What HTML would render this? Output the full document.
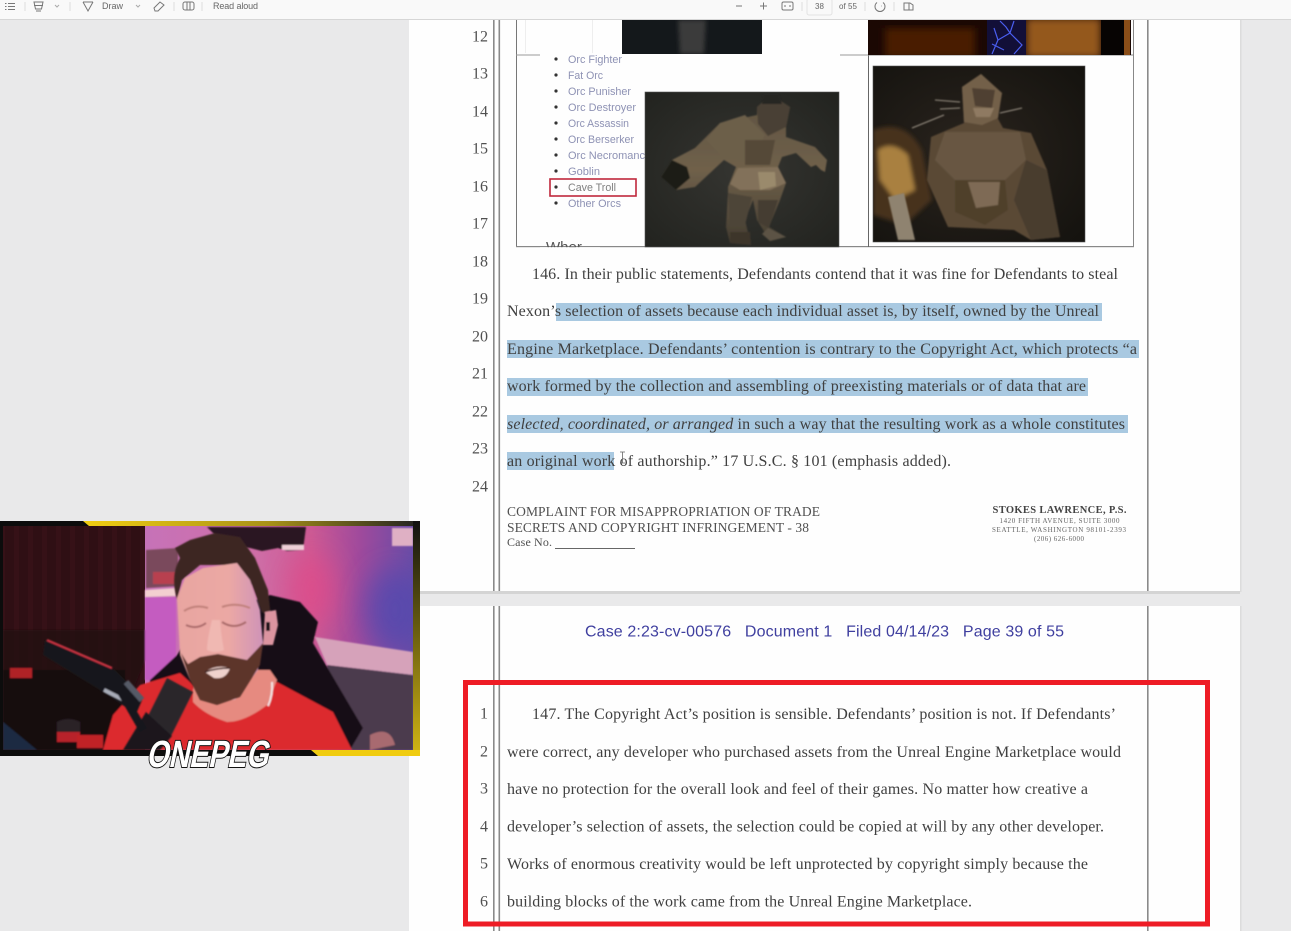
<!DOCTYPE html>
<html><head><meta charset="utf-8"><style>
html,body{margin:0;padding:0;background:#e9e9ea;width:1291px;height:931px;overflow:hidden}
svg{display:block}
.s{font-family:"Liberation Serif",serif;font-size:16px;fill:#404040;filter:blur(.3px)}
.n{font-family:"Liberation Serif",serif;font-size:16px;fill:#505050;text-anchor:end;filter:blur(.3px)}
.u{font-family:"Liberation Sans",sans-serif;font-size:9px;fill:#666;filter:blur(.3px)}
.l{font-family:"Liberation Sans",sans-serif;font-size:11px;fill:#8e92b4;filter:blur(.35px)}
.f{font-family:"Liberation Serif",serif;font-size:13.5px;fill:#505050;filter:blur(.25px)}
.a{font-family:"Liberation Serif",serif;font-size:7px;fill:#666;text-anchor:middle;filter:blur(.25px)}
</style></head><body>
<svg width="1291" height="931" viewBox="0 0 1291 931" xmlns="http://www.w3.org/2000/svg">
<defs>
<filter id="b05"><feGaussianBlur stdDeviation=".8"/></filter>
<filter id="b1"><feGaussianBlur stdDeviation="1.2"/></filter>
<filter id="b2"><feGaussianBlur stdDeviation="2"/></filter>
<filter id="b4"><feGaussianBlur stdDeviation="4"/></filter>
<filter id="b12" x="-50%" y="-50%" width="200%" height="200%"><feGaussianBlur stdDeviation="14"/></filter>
<linearGradient id="wall" x1="0" x2="1" y1="0" y2="0"><stop offset="0" stop-color="#c672b8"/><stop offset=".4" stop-color="#cf6fa8"/><stop offset=".62" stop-color="#cc5a94"/><stop offset=".8" stop-color="#a04a9c"/><stop offset="1" stop-color="#6a4ca6"/></linearGradient>
<linearGradient id="yt" x1="0" x2="1" y1="0" y2="0"><stop offset="0" stop-color="#f2ce12"/><stop offset=".55" stop-color="#a89218"/><stop offset="1" stop-color="#222"/></linearGradient>
<linearGradient id="yr" x1="0" x2="0" y1="0" y2="1"><stop offset="0" stop-color="#111"/><stop offset=".4" stop-color="#5c5210"/><stop offset="1" stop-color="#d2b614"/></linearGradient>
<linearGradient id="face" x1="0" x2="1" y1="0" y2="0"><stop offset="0" stop-color="#e8a5a0"/><stop offset=".6" stop-color="#eba8a4"/><stop offset="1" stop-color="#cf93b8"/></linearGradient>
<radialGradient id="g1" cx=".5" cy=".5" r=".7"><stop offset="0" stop-color="#353531"/><stop offset="1" stop-color="#22231f"/></radialGradient>
<radialGradient id="g2" cx=".45" cy=".5" r=".7"><stop offset="0" stop-color="#2a241e"/><stop offset="1" stop-color="#15130f"/></radialGradient>
<linearGradient id="tb" x1="0" x2="0" y1="0" y2="1"><stop offset="0" stop-color="#5e5240"/><stop offset=".5" stop-color="#6f604a"/><stop offset="1" stop-color="#423b30"/></linearGradient>
<pattern id="cur" width="14" height="10" patternUnits="userSpaceOnUse"><rect width="14" height="10" fill="#2f0f14"/><rect width="5" height="10" fill="#361117"/></pattern>
</defs>

<!-- pages -->
<rect x="0" y="0" width="1291" height="931" fill="#e9e9ea"/>
<rect x="409" y="15" width="831" height="576" fill="#fefefe"/>
<rect x="409" y="606" width="831" height="330" fill="#fefefe"/>
<rect x="409" y="591" width="831" height="3" fill="#d4d4d4"/>
<rect x="1240" y="15" width="1.5" height="577" fill="#dcdcdc"/>
<rect x="1240" y="606" width="1.5" height="325" fill="#dcdcdc"/>

<!-- page rules -->
<g fill="#8a8a8a">
<rect x="493" y="15" width="1.6" height="576"/><rect x="498.5" y="15" width="1.6" height="576"/><rect x="1147" y="15" width="1.6" height="576"/>
<rect x="493" y="606" width="1.6" height="325"/><rect x="498.5" y="606" width="1.6" height="325"/><rect x="1147" y="606" width="1.6" height="325"/>
</g>

<!-- table area -->
<rect x="516" y="20" width="1" height="227" fill="#777"/>
<rect x="1133" y="20" width="1" height="227" fill="#888"/>
<rect x="516" y="246" width="618" height="1.2" fill="#888"/>
<rect x="868" y="20" width="1" height="227" fill="#666"/>
<rect x="516" y="54.5" width="24" height="1" fill="#999"/>
<rect x="840" y="54.5" width="28" height="1" fill="#999"/>
<rect x="868" y="54.5" width="266" height="1" fill="#888"/>
<rect x="525" y="20" width="1" height="33" fill="#eee"/><rect x="592" y="20" width="1" height="33" fill="#eee"/><rect x="748" y="20" width="1" height="33" fill="#eee"/>

<!-- top images -->
<rect x="622" y="20" width="140" height="34" fill="#14181b"/>
<svg x="622" y="20" width="140" height="34" viewBox="622 20 140 34"><path d="M678 20h28l-2 34h-24z" fill="#3a3a3a" filter="url(#b2)"/></svg>
<svg x="868" y="20" width="263" height="35" viewBox="868 20 263 35">
<rect x="868" y="20" width="263" height="35" fill="#1b0803"/>
<rect x="885" y="28" width="90" height="30" fill="#4a1c06" filter="url(#b4)"/>
<rect x="1026" y="18" width="75" height="40" fill="#94581e" filter="url(#b4)"/>
<rect x="1101" y="18" width="23" height="40" fill="#070403"/>
<rect x="1124" y="20" width="6" height="35" fill="#8a4e18"/>
<rect x="987" y="20" width="39" height="35" fill="#120f38"/>
<path d="M992 54L998 40L994 28M998 40L1010 33L1014 21M1010 33L1022 45L1014 54M1000 21L1006 27L1010 33M992 44L1004 50" stroke="#4a5ef0" stroke-width="1.2" fill="none"/>
</svg>

<!-- list -->
<g>
<text class="l" x="568" y="63" textLength="54" lengthAdjust="spacingAndGlyphs">Orc Fighter</text>
<text class="l" x="568" y="79" textLength="35" lengthAdjust="spacingAndGlyphs">Fat Orc</text>
<text class="l" x="568" y="95" textLength="63" lengthAdjust="spacingAndGlyphs">Orc Punisher</text>
<text class="l" x="568" y="111" textLength="68" lengthAdjust="spacingAndGlyphs">Orc Destroyer</text>
<text class="l" x="568" y="127" textLength="61" lengthAdjust="spacingAndGlyphs">Orc Assassin</text>
<text class="l" x="568" y="143" textLength="66" lengthAdjust="spacingAndGlyphs">Orc Berserker</text>
<text class="l" x="568" y="159">Orc Necromancer</text>
<text class="l" x="568" y="175" textLength="32" lengthAdjust="spacingAndGlyphs">Goblin</text>
<text class="l" x="568" y="191" textLength="48" lengthAdjust="spacingAndGlyphs" style="fill:#808080">Cave Troll</text>
<text class="l" x="568" y="207" textLength="53" lengthAdjust="spacingAndGlyphs">Other Orcs</text>
</g>
<g fill="#333">
<circle cx="556" cy="59" r="1.6"/><circle cx="556" cy="75" r="1.6"/><circle cx="556" cy="91" r="1.6"/><circle cx="556" cy="107" r="1.6"/><circle cx="556" cy="123" r="1.6"/><circle cx="556" cy="139" r="1.6"/><circle cx="556" cy="155" r="1.6"/><circle cx="556" cy="171" r="1.6"/><circle cx="556" cy="187" r="1.6"/><circle cx="556" cy="203" r="1.6"/>
</g>
<rect x="550" y="179" width="86" height="17" fill="none" stroke="#c0283c" stroke-width="1.6"/>
<text x="546" y="252" style="font-family:'Liberation Sans',sans-serif;font-size:15px;fill:#555">Wher</text>
<rect x="540" y="247.2" width="60" height="9" fill="#fefefe"/>

<!-- troll 1 -->
<rect x="645" y="92" width="194" height="155" fill="url(#g1)"/>
<svg x="645" y="92" width="194" height="155" viewBox="645 92 194 155">
<g filter="url(#b05)">
<path d="M757 107L771 95L790 107L786 127L786 137L815 147L827 160L825 172L821 170L816 165L811 167L796 153L782 157L778 167L786 183L780 200L769 227L786 237L770 241L757 220L753 200L745 220L751 245L730 243L726 227L728 193L728 187L736 167L724 160L695 187L676 190L661 177L672 160L695 148L720 123L757 115Z" fill="url(#tb)"/>
<path d="M661 177L672 160L687 167L690 178L676 190Z" fill="#1a1a18"/>
<path d="M720 123L745 115L765 135L752 160L724 158L706 140Z" fill="#6c5e4a"/>
<path d="M757 107L771 95L790 107L786 127L768 136L758 124Z" fill="#4a4136"/>
<path d="M763 95h16l3 9h-20z" fill="#262624"/>
<path d="M738 168L778 167L786 183L770 190L740 190L730 184Z" fill="#82715a"/>
<path d="M758 172L775 172L776 186L760 190Z" fill="#9a8a6c"/>
<path d="M728 193L752 197L745 225L730 225Z" fill="#4e4538"/>
<path d="M758 200L778 200L769 228L758 222Z" fill="#443c32"/>
<path d="M730 232L750 232L751 245L730 243Z" fill="#3c352c"/>
<path d="M768 228L786 237L770 241L762 234Z" fill="#5c5244"/>
<path d="M745 140L775 140L770 165L745 165Z" fill="#544838"/>
</g></svg>

<!-- troll 2 -->
<rect x="873" y="66" width="212" height="176" fill="url(#g2)"/>
<svg x="873" y="66" width="212" height="176" viewBox="873 66 212 176">
<g filter="url(#b2)">
<path d="M873 130Q905 118 922 150L932 200L905 225L873 215Z" fill="#46331f"/>
<path d="M878 150Q892 140 908 155L915 190L895 200L880 180Z" fill="#a98040"/>
</g>
<g filter="url(#b05)">
<path d="M962 87L981 74L1002 93L997 117L1003 128L1031 133L1047 170L1060 237L1031 240L1014 230L948 227L939 207L927 180L931 137L964 123Z" fill="#5a4836"/>
<path d="M962 87L981 74L1002 93L998 118L982 125L964 122Z" fill="#73604a"/>
<path d="M972 88L995 90L992 108L975 106Z" fill="#4f3f30"/>
<path d="M973 108L994 108L990 117L976 117Z" fill="#8f7a62"/>
<path d="M945 132L1020 132L1026 160L1005 180L955 180L935 160Z" fill="#685642"/>
<path d="M955 180L1005 180L1008 210L985 225L955 212Z" fill="#4f3f2c"/>
<path d="M968 182L1000 182L998 205L976 208Z" fill="#7e6b54"/>
<path d="M1026 160L1047 170L1060 237L1031 240L1014 200Z" fill="#4a3c2e"/>
<path d="M935 100L960 102M940 109L960 108M912 128L944 115M1000 113L1022 108" stroke="#9b9386" stroke-width="1.1" fill="none"/>
<path d="M888 197L904 193L915 240L898 240Z" fill="#8f8370"/>
</g></svg>
<rect x="873" y="66" width="212" height="176" fill="none" stroke="#555" stroke-width=".6"/>
<rect x="645" y="92" width="194" height="155" fill="none" stroke="#555" stroke-width=".6"/>

<!-- line numbers top -->
<text class="n" x="488" y="41.5">12</text>
<text class="n" x="488" y="78.5">13</text>
<text class="n" x="488" y="116.5">14</text>
<text class="n" x="488" y="153.5">15</text>
<text class="n" x="488" y="191.5">16</text>
<text class="n" x="488" y="228.5">17</text>
<text class="n" x="488" y="266.5">18</text>
<text class="n" x="488" y="303.5">19</text>
<text class="n" x="488" y="341.5">20</text>
<text class="n" x="488" y="378.5">21</text>
<text class="n" x="488" y="416.5">22</text>
<text class="n" x="488" y="453.5">23</text>
<text class="n" x="488" y="491.5">24</text>

<!-- highlights -->
<g fill="#a9c9e1">
<rect x="556" y="303" width="546" height="18"/>
<rect x="507" y="340" width="632" height="18"/>
<rect x="507" y="378" width="581" height="18"/>
<rect x="507" y="415" width="621" height="18"/>
<rect x="507" y="452" width="107" height="18"/>
</g>

<!-- body text top -->
<text class="s" x="532" y="279" textLength="586" lengthAdjust="spacing">146. In their public statements, Defendants contend that it was fine for Defendants to steal</text>
<text class="s" x="507" y="316" textLength="592" lengthAdjust="spacing">Nexon’s selection of assets because each individual asset is, by itself, owned by the Unreal</text>
<text class="s" x="507" y="354" textLength="630" lengthAdjust="spacing">Engine Marketplace.  Defendants’ contention is contrary to the Copyright Act, which protects “a</text>
<text class="s" x="507" y="391" textLength="579" lengthAdjust="spacing">work formed by the collection and assembling of preexisting materials or of data that are</text>
<text class="s" x="507" y="429" textLength="618" lengthAdjust="spacing"><tspan font-style="italic">selected, coordinated, or arranged</tspan> in such a way that the resulting work as a whole constitutes</text>
<text class="s" x="507" y="466" textLength="444" lengthAdjust="spacing">an original work of authorship.”  17 U.S.C. § 101 (emphasis added).</text>
<path d="M620 452h5M622.5 452v11M620 463h5" stroke="#666" stroke-width=".8" fill="none"/>

<!-- footer -->
<text class="f" x="507" y="516" textLength="313" lengthAdjust="spacing">COMPLAINT FOR MISAPPROPRIATION OF TRADE</text>
<text class="f" x="507" y="532" textLength="302" lengthAdjust="spacing">SECRETS AND COPYRIGHT INFRINGEMENT - 38</text>
<text class="f" x="507" y="546" style="font-size:12px" textLength="45" lengthAdjust="spacing">Case No.</text>
<rect x="555" y="548" width="80" height="1" fill="#666"/>
<text x="1059.5" y="513" text-anchor="middle" textLength="134" lengthAdjust="spacing" style="font-family:'Liberation Serif',serif;font-weight:bold;font-size:10.5px;fill:#444">STOKES LAWRENCE, P.S.</text>
<text class="a" x="1059.5" y="523" textLength="120" lengthAdjust="spacing">1420 FIFTH AVENUE, SUITE 3000</text>
<text class="a" x="1059" y="532" textLength="134" lengthAdjust="spacing">SEATTLE, WASHINGTON 98101-2393</text>
<text class="a" x="1059" y="541" textLength="50" lengthAdjust="spacing">(206) 626-6000</text>

<!-- page 2 -->
<text x="585" y="636.5" textLength="479" lengthAdjust="spacing" xml:space="preserve" style="font-family:'Liberation Sans',sans-serif;font-size:16px;fill:#3f3f9f;white-space:pre;filter:blur(.25px)">Case 2:23-cv-00576   Document 1   Filed 04/14/23   Page 39 of 55</text>
<text class="n" x="488" y="718.5">1</text>
<text class="n" x="488" y="756.5">2</text>
<text class="n" x="488" y="793.5">3</text>
<text class="n" x="488" y="831.5">4</text>
<text class="n" x="488" y="868.5">5</text>
<text class="n" x="488" y="906.5">6</text>
<text class="s" x="532" y="719" textLength="584" lengthAdjust="spacing">147. The Copyright Act’s position is sensible. Defendants’ position is not.  If Defendants’</text>
<text class="s" x="507" y="757" textLength="614" lengthAdjust="spacing">were correct, any developer who purchased assets from the Unreal Engine Marketplace would</text>
<text class="s" x="507" y="794" textLength="581" lengthAdjust="spacing">have no protection for the overall look and feel of their games.  No matter how creative a</text>
<text class="s" x="507" y="831.5" textLength="597" lengthAdjust="spacing">developer’s selection of assets, the selection could be copied at will by any other developer.</text>
<text class="s" x="507" y="869" textLength="581" lengthAdjust="spacing">Works of enormous creativity would be left unprotected by copyright simply because the</text>
<text class="s" x="507" y="906.5" textLength="465" lengthAdjust="spacing">building blocks of the work came from the Unreal Engine Marketplace.</text>

<!-- red box -->
<rect x="465.5" y="682.5" width="742" height="241.5" fill="none" stroke="#ee1c25" stroke-width="5"/>

<!-- toolbar -->
<rect x="0" y="0" width="1291" height="19" fill="#f9f9f9"/>
<rect x="0" y="19" width="1291" height="1" fill="#d6d6d6"/>
<g stroke="#777" stroke-width="1" fill="none">
<path d="M8 3.5h7M8 6.5h7M8 9.5h7M5 3.5h1.5M5 6.5h1.5M5 9.5h1.5"/>
<path d="M34 2h9l-1.5 7h-6zM34 5.5h9M36 11h5"/>
<path d="M55 5l2 2 2-2" stroke="#aaa"/>
<path d="M83 2l5 9 5-9M83 2h10"/>
<path d="M136 5l2 2 2-2" stroke="#aaa"/>
<path d="M154 8l6-6 4 3-6 6h-3z"/>
<rect x="183" y="2" width="11" height="8" rx="2"/><path d="M187 2v8M190 2v8"/>
<path d="M736 6h6M760 6h7M763.5 2.5v7"/>
<rect x="782" y="2" width="11" height="8" rx="1.5"/><path d="M784 6h2M789 6h2"/>
<path d="M877 2.5a5 5 0 1 0 6 0M881 6h.5"/>
<path d="M904 3h6l3 2v5h-9zM909 3v7"/>
</g>
<g stroke="#ddd" stroke-width="1">
<path d="M25 2v9M70 2v9M174 2v9M202 2v9M802 2v9M865 2v9M894 2v9"/>
</g>
<rect x="807" y="-1" width="25" height="16" rx="2" fill="none" stroke="#e2e2e2"/>
<text class="u" x="102" y="9">Draw</text>
<text class="u" x="213" y="9" textLength="45" lengthAdjust="spacing">Read aloud</text>
<text class="u" x="815" y="9" style="font-size:8px">38</text>
<text class="u" x="839" y="9" style="font-size:8px" textLength="18" lengthAdjust="spacing">of 55</text>

<!-- webcam -->
<rect x="0" y="521" width="413" height="235" fill="#0c0c0c"/>
<path d="M83 521H420V526H89Z" fill="url(#yt)"/>
<rect x="413" y="521" width="7" height="235" fill="url(#yr)"/>
<path d="M311 750H420V756H318Z" fill="#f0cc10"/>
<svg x="3" y="526" width="410" height="224" viewBox="3 526 410 224">
<rect x="3" y="526" width="142" height="224" fill="url(#cur)"/>
<rect x="145" y="526" width="268" height="224" fill="url(#wall)"/>
<ellipse cx="312" cy="590" rx="24" ry="38" fill="#e24a88" opacity=".7" filter="url(#b12)"/>
<ellipse cx="395" cy="610" rx="30" ry="42" fill="#4f4ab0" opacity=".75" filter="url(#b12)"/>
<g filter="url(#b05)">
<path d="M3 630H145V660L110 750H3Z" fill="#200a10" opacity=".75"/>
<path d="M3 670H125V750H3Z" fill="#140a10"/>
<path d="M145 597H176L176 660L150 680H145Z" fill="#c45cc0"/>
<path d="M145 590L176 588V596L145 597Z" fill="#f3cfd0"/>
<path d="M146 550L178 548V586L146 588Z" fill="#7a4a5c"/>
<rect x="153" y="572" width="24" height="12" fill="#b84050"/>
<path d="M207 527H306L303 550L287 551L278 548L262 551L250 548L225 545Z" fill="#2b1820"/>
<rect x="282" y="545" width="22" height="5" fill="#efd0d8"/>
<rect x="392" y="528" width="21" height="18" fill="#dfb0c4"/>
<path d="M315 637L413 652V675L327 665Z" fill="#d6a2ba"/>
<path d="M327 665L413 675V750H350Z" fill="#4c3a4e"/>
<path d="M370 735Q390 725 395 745L370 750Z" fill="#a86a70"/>
<path d="M270 595L300 602L318 622L313 643L363 728L350 750H150V680L177 655L200 620Z" fill="#181016"/>
<path d="M10 668H32V678H10Z" fill="#b02028"/>
<path d="M57 732H80V742H57Z" fill="#b8202a"/>
<path d="M77 735H103V748H77Z" fill="#c02028"/>
<path d="M57 722Q68 716 80 722V732H57Z" fill="#2a2226"/>
<path d="M3 722L37 750H3Z" fill="#1f2b42"/>
<path d="M103 750L113 715L140 685L180 673L215 705L277 682L333 712L352 750Z" fill="#dc2a2e"/>
<path d="M193 690L200 670H270L277 680L267 705Q245 722 227 722Q205 715 193 702Z" fill="#e68a80"/>
<path d="M272 682Q273 695 268 706" stroke="#f4e6e6" stroke-width="2" fill="none"/>
</g>
<g filter="url(#b05)">
<path d="M177 600Q170 575 180 558L175 548L190 540L215 533L240 537L255 558L268 590L271 618L262 612L252 585L238 565H200L182 580Z" fill="#3c2522"/>
<path d="M265 612L276 610L278 625L273 645L263 645Z" fill="#dc94a0"/>
<path d="M268 622v9" stroke="#141014" stroke-width="4"/>
<path d="M177 598L185 578L203 568L237 563L250 580L260 610L263 643L258 670L235 700H205L190 680L180 655Z" fill="url(#face)"/>
<path d="M181 653L188 664L200 657L218 654L247 660L263 643L260 665L240 697L217 705L200 700L190 680Z" fill="#5d342b"/>
<path d="M205 672Q216 664 230 668Q226 680 214 678Z" fill="#efd2cd"/>
<path d="M205 672Q216 668 230 668" stroke="#3a1e1e" stroke-width="1.5" fill="none"/>
<path d="M184 611Q195 604 208 608M222 607Q236 602 250 608" stroke="#c08079" stroke-width="2" fill="none"/>
<path d="M186 625Q197 630 206 623M222 622Q234 630 246 622" stroke="#a86868" stroke-width="2" fill="none"/>
<path d="M212 620Q207 640 207 650Q215 654 224 650Q221 635 220 620Z" fill="#f0b8b2"/>
<path d="M147 718L167 678L193 692L170 738Z" fill="#29282c"/>
<path d="M123 750L146 712L172 736L160 750Z" fill="#1a191d"/>
<path d="M45 640L115 670L143 698L136 714L100 690L43 655Z" fill="#15131a"/>
<path d="M47 640L112 668" stroke="#c43240" stroke-width="2.2"/>
<path d="M126 682L142 700" stroke="#555a66" stroke-width="6"/>
<path d="M104 690L124 700" stroke="#a8acb8" stroke-width="4"/>
<path d="M120 690L143 730" stroke="#15131a" stroke-width="8"/>
</g>
</svg>
<g transform="translate(143 0) skewX(-12)">
<text x="166" y="767" textLength="122" lengthAdjust="spacingAndGlyphs" style="font-family:'Liberation Sans',sans-serif;font-weight:bold;font-size:38px;fill:#fff;stroke:#111;stroke-width:2;paint-order:stroke">ONEPEG</text>
</g>
</svg>
</body></html>
